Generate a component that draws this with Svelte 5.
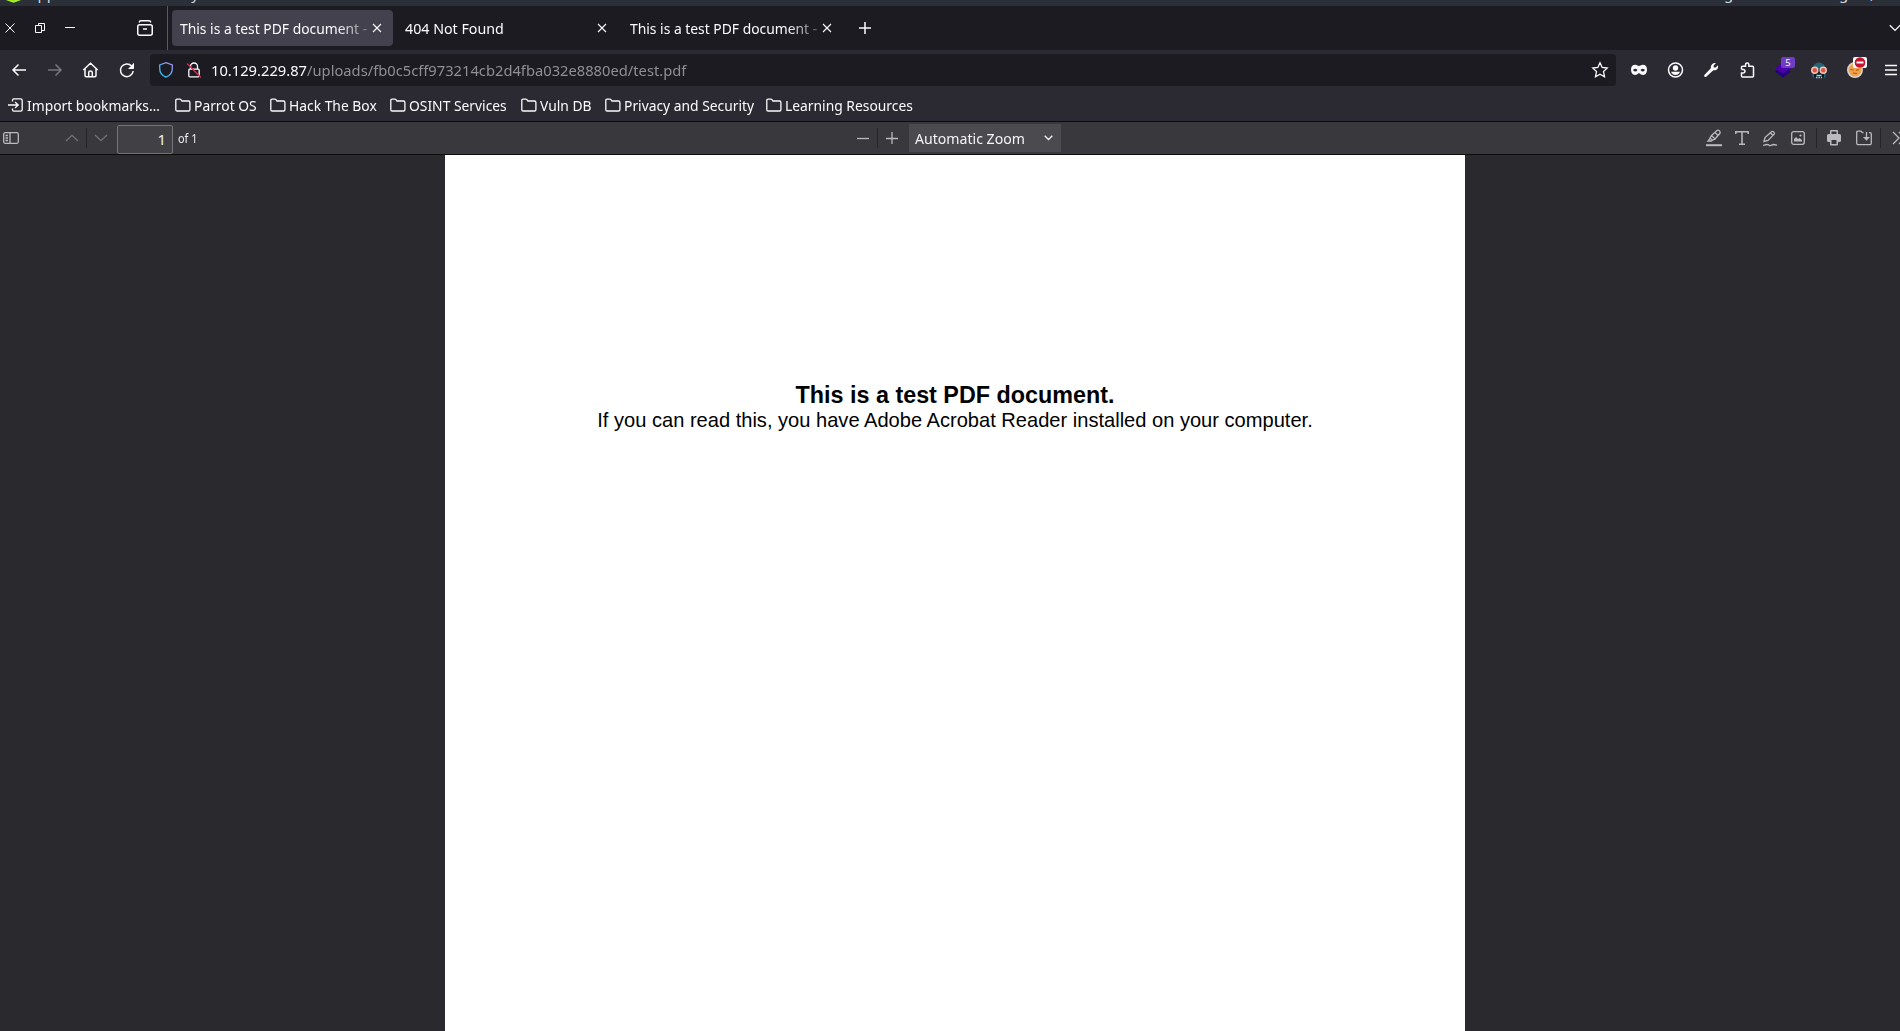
<script>
  const tabs = [
    { title: 'This is a test PDF document -', active: true, fade: true },
    { title: '404 Not Found', active: false, fade: false },
    { title: 'This is a test PDF document -', active: false, fade: true }
  ];
  const bookmarks = [
    { label: 'Parrot OS', width: 95 },
    { label: 'Hack The Box', width: 120 },
    { label: 'OSINT Services', width: 131 },
    { label: 'Vuln DB', width: 84 },
    { label: 'Privacy and Security', width: 161 },
    { label: 'Learning Resources', width: 160 }
  ];
</script>

<div class="screen">
  <div class="panel">
    <svg class="logo" width="16" height="6" viewBox="0 0 16 6"><path d="M0 0h16L8 3.2z" fill="#86d015" /><path d="M0 0l7.5 2.8L15 0" stroke="#a5ee2c" fill="none" stroke-width="2" /></svg>
    <span class="apps">Applications</span><span class="places">Places</span><span class="system">System</span>
    <span class="g1">g</span><span class="g2">g</span><span class="g3">,</span>
  </div>

  <div class="tabbar">
    <div class="win">
      <svg width="20" height="20" viewBox="0 0 20 20"><path d="M5.5 5.5l9 9m0-9l-9 9" /></svg>
      <svg width="20" height="20" viewBox="0 0 20 20"><path d="M5.5 7.5h6v7h-6zM8.500 7.500V5.500h6v7H12" /></svg>
      <svg width="20" height="20" viewBox="0 0 20 20"><path d="M5 9.500h10" /></svg>
    </div>
    <svg class="archive" width="18" height="18" viewBox="0 0 18 18"><rect x="1.750" y="5.750" width="14.500" height="10.500" rx="2" /><path d="M3.200 3.500Q3.500 1.800 5 1.800h8q1.500 0 1.800 1.700M7 10h4" /></svg>
    <div class="tabs">
      {#each tabs as tab}
        <div class="tab" class:active={tab.active}>
          <div class="title" class:fade={tab.fade}><span class="narrow">{tab.title}</span></div>
          <svg width="10" height="10" viewBox="0 0 10 10"><path d="M1 1l8 8m0-8L1 9" /></svg>
        </div>
      {/each}
      <svg class="plus" width="12" height="12" viewBox="0 0 12 12"><path d="M6 0v12M0 6h12" /></svg>
    </div>
    <svg class="alltabs" width="12" height="8" viewBox="0 0 12 8"><path d="M.8 1.200L6 6.400l5.200-5.200" /></svg>
  </div>

  <div class="nav">
    <div class="cell"><svg width="16" height="16" viewBox="0 0 16 16"><path d="M15 8H2M7.500 2.500L2 8l5.500 5.500" /></svg></div>
    <div class="cell dim"><svg width="16" height="16" viewBox="0 0 16 16"><path d="M1 8h13M8.500 2.500L14 8l-5.500 5.500" /></svg></div>
    <div class="cell"><svg width="16" height="16" viewBox="0 0 16 16"><path d="M.3 8L7.500 1.200 14.700 8M2 7v6.500q0 1.200 1.200 1.200h8.600q1.200 0 1.200-1.200V7M5.700 14.500V10.500Q5.700 9 7.500 9t1.800 1.500v4" /></svg></div>
    <div class="cell"><svg width="16" height="16" viewBox="0 0 16 16"><path d="M12.600 4A6.400 6.400 0 1 0 14.200 9" /><path class="solid" d="M15 .8v5.500q0 .7-.7.7H9z" /></svg></div>
    <div class="urlbar">
      <svg class="shield" width="16" height="18" viewBox="0 0 16 18">
        <defs><linearGradient id="sh" x1="0" y1="1" x2="1" y2="0"><stop offset="0" stop-color="#26c5f3" /><stop offset=".5" stop-color="#55a8f0" /><stop offset="1" stop-color="#b18cf0" /></linearGradient></defs>
        <path d="M8 1.700L14.300 4v3.500c0 4.200-2.300 7.200-6.300 8.700-4-1.500-6.300-4.500-6.300-8.700V4z" stroke="url(#sh)" />
      </svg>
      <svg class="lock" width="16" height="18" viewBox="0 0 16 18"><rect x="2.800" y="8.200" width="10.400" height="7.600" rx="1" /><path d="M4.500 8V5.500a3.500 3.500 0 0 1 7 0V8" /><path d="M1 2.500L15 16.500" stroke="#e22850" /></svg>
      <div class="url"><span class="narrow"><b>10.129.229.87</b>/uploads/fb0c5cff973214cb2d4fba032e8880ed/test.pdf</span></div>
      <svg class="star" width="18" height="18" viewBox="0 0 18 18"><path d="M9 1.800l2.200 4.700 5 .6-3.700 3.500 1 5.200L9 13.200l-4.500 2.600 1-5.200L1.800 7.100l5-.6z" /></svg>
    </div>
    <div class="cell"><svg width="16" height="16" viewBox="0 0 16 16"><path class="solid" fill-rule="evenodd" d="M4.200 2.700C6 2.700 7 4 8 4s2-1.300 3.800-1.300C14.500 2.700 16 4.500 16 7.500c0 3.300-1.500 5.500-4 5.500-2 0-2.800-1.800-4-1.800S6 13 4 13c-2.500 0-4-2.200-4-5.500C0 4.500 1.500 2.700 4.200 2.700zM2 8q2.300 3 4.500 0Q4.300 5.500 2 8zm7.500 0q2.200 3 4.500 0-2.300-2.500-4.500 0z" /></svg></div>
    <div class="cell"><svg width="16" height="16" viewBox="0 0 16 16"><circle cx="8.500" cy="8" r="7" /><circle class="solid" cx="8.500" cy="6" r="2.700" /><path class="solid" d="M4 9.800h9Q11.500 13 8.500 13T4 9.800z" /></svg></div>
    <div class="cell"><svg width="16" height="16" viewBox="0 0 16 16"><path class="solid" d="M13 1L10.700 3.500v2h2L15 3.200c.7 3.300-1.700 5.800-4.600 5L3.200 14.700c-1 1-2.800-.4-1.800-1.700L8 6.100C7.200 3.200 9.800.3 13 1z" /></svg></div>
    <div class="cell"><svg width="16" height="16" viewBox="0 0 16 16"><path d="M2.500 7.500V5.200q0-1 1-1h3V2.800a1.700 1.700 0 0 1 3.400 0v1.400h3.600q1 0 1 1V14q0 1-1 1h-10q-1 0-1-1v-3h1.700a1.700 1.700 0 0 0 0-3.500H2.500" /></svg></div>
    <div class="cell ext"><svg width="18" height="18" viewBox="0 0 18 18"><path d="M9 5l8 5.500-8 6-8-6z" fill="#24007a" /><path d="M9 1l8 6.200-8 5.500-8-5.500z" fill="#4a00a8" /></svg><span class="badge">5</span></div>
    <div class="cell ext"><svg width="18" height="18" viewBox="0 0 18 18"><path d="M2.500 16.500V8a6.500 6.500 0 0 1 13 0v8.500z" fill="#246477" /><path d="M4 8h10v8.500H4z" fill="#101820" /><circle cx="4.800" cy="9.300" r="3" fill="#df5145" stroke="#f1c5b5" stroke-width="1.500" /><circle cx="13.200" cy="9.300" r="3" fill="#df5145" stroke="#f1c5b5" stroke-width="1.500" /><path d="M6.500 14.500h5M6 16.500h1.500m1 0h1.500m1 0h1" stroke="#85d5e5" stroke-width="1.300" /></svg></div>
    <div class="cell ext"><svg width="18" height="18" viewBox="0 0 18 18"><circle cx="9" cy="9" r="7.200" fill="#f0a04b" stroke="#d9d4ca" stroke-width="1.600" /><path d="M4.500 8.500l3 .5M7 12l4 .5M10 9.500l3-1" stroke="#a95d19" stroke-width="1.200" /></svg>
      <span class="stop"><svg width="12" height="11" viewBox="0 0 12 11"><circle cx="6" cy="5.500" r="5.300" fill="#c4122f" /><path d="M2.500 5.500h7" stroke="#fff" stroke-width="2" /></svg></span></div>
    <div class="cell"><svg width="16" height="16" viewBox="0 0 16 16"><path d="M2 3.500h12M2 8h12M2 12.500h12" /></svg></div>
  </div>

  <div class="bookmarks">
    <div class="bm import"><svg width="16" height="16" viewBox="0 0 16 16"><path d="M4.500 4.500V3.200q0-1.400 1.400-1.400h6.700q1.600 0 1.600 1.400v9.600q0 1.400-1.600 1.400H5.900q-1.400 0-1.400-1.400v-1.300M0 8h10M7 5l3.200 3L7 11" /></svg><span class="narrow">Import bookmarks…</span></div>
    {#each bookmarks as b}
      <div class="bm" style:width="{b.width}px"><svg width="16" height="16" viewBox="0 0 16 16"><path d="M.8 12.700V3.500q0-1.300 1.300-1.300h2.800q.6 0 1 .5l1 1.300h6.600q1.400 0 1.400 1.400v7.300q0 1.300-1.400 1.300H2.200Q.8 14 .8 12.700z" /></svg><span class="narrow">{b.label}</span></div>
    {/each}
  </div>

  <div class="toolbar">
    <svg class="side" width="16" height="14" viewBox="0 0 16 14"><rect x=".7" y="1.700" width="14.600" height="10.600" rx="1.500" /><path d="M7 2v10M2.500 4.500h2.500M2.500 7H5M2.500 9.500H5" /></svg>
    <svg class="up" width="14" height="8" viewBox="0 0 14 8"><path d="M1 7l6-5.700L13 7" /></svg>
    <i></i>
    <svg class="down" width="14" height="8" viewBox="0 0 14 8"><path d="M1 1l6 5.700L13 1" /></svg>
    <div class="pageno">1</div><div class="of"><span class="narrow">of 1</span></div>
    <svg class="minus" width="12" height="12" viewBox="0 0 12 12"><path d="M0 6.500h12" /></svg>
    <i></i>
    <svg class="zoomin" width="12" height="12" viewBox="0 0 12 12"><path d="M6 0v12M0 6.500h12" /></svg>
    <div class="select"><div class="value"><span class="narrow">Automatic Zoom</span></div><svg width="9" height="6" viewBox="0 0 9 6"><path d="M.7 .8l3.800 3.700L8.300.8" /></svg></div>
    <div class="tools">
      <svg width="16" height="18" viewBox="0 0 16 18"><path d="M0 16.200h16" stroke-width="2" /><path d="M5.500 6.500L11 1.500q1-.8 2.300.3t.7 2.500L9 10zM5.500 6.500L4 9l2.500 2.300L9 10M4 9.500L2 12h3.500l1-1M9 3.500l3 3" /></svg>
      <svg class="t" width="14" height="16" viewBox="0 0 14 16"><path d="M.8 4V1.700h12.400V4M7 1.700v12.600M4 14.300h6" stroke-width="1.500" /></svg>
      <svg class="pen" width="16" height="17" viewBox="0 0 16 17"><path d="M2 11.500l1-4L9.500 1.800q1-.8 2.200.2t.5 2.200L6 10.500zM8.500 3l2.700 2.700M1 15.500q3-1 4.500-1t1.500.8 2 0 2.500-.8 3.500.6" /></svg>
      <svg class="img" width="14" height="14" viewBox="0 0 14 14"><rect x=".7" y=".7" width="12.600" height="12.600" rx="2" /><path class="fill" d="M3 10.500V8l2-2 2 2 1.500-1L11 9v1.500z" /><circle class="fill" cx="9.500" cy="4.500" r="1.100" /></svg>
      <i></i>
      <svg class="print" width="14" height="16" viewBox="0 0 14 16"><path class="fill" d="M3 4V1q0-1 1-1h6q1 0 1 1v3h1.500Q14 4 14 5.500v5q0 1.500-1.500 1.500H11v2.500q0 1-1 1H4q-1 0-1-1V12H1.500Q0 12 0 10.500v-5Q0 4 1.500 4zm1.500 0h5V1.500h-5zm0 6v4h5v-4z" fill-rule="evenodd" /></svg>
      <svg class="save" width="16" height="16" viewBox="0 0 16 16"><path d="M7.500 2.700H6.500L5 1.200H2Q.7 1.200.7 2.500v10.800q0 1.300 1.300 1.300h12q1.300 0 1.300-1.300V4q0-1.300-1.300-1.300h-1M10.500 2v7" /><path class="fill" d="M7 7h7l-3.500 3.700z" /></svg>
      <i></i>
      <svg class="more" width="14" height="14" viewBox="0 0 14 14"><path d="M1 1l6 6-6 6M7 1l6 6-6 6" /></svg>
    </div>
  </div>

  <div class="viewer">
    <div class="page">
      <div class="heading">This is a test PDF document.</div>
      <div class="body">If you can read this, you have Adobe Acrobat Reader installed on your computer.</div>
    </div>
  </div>
</div>

<style>
  :global(body) { overflow: hidden; background: #2a2a2e; }
  .screen { width: 1900px; height: 1031px; overflow: hidden; display: flex; flex-direction: column; font: 15px/20px "Noto Sans", sans-serif; color: #fbfbfe; white-space: nowrap; }
  .screen * { box-sizing: border-box; }
  svg { flex: none; display: block; fill: none; stroke: currentColor; stroke-width: 1.300; overflow: visible; }
  .solid, .fill { fill: currentColor; stroke: none; }
  .narrow { display: inline-block; transform: scaleX(.923); transform-origin: 0 50%; }

  .panel { position: relative; height: 6px; flex: none; background: #2b2f38; overflow: hidden; color: #d3dae3; }
  .panel svg, .panel span { position: absolute; }
  .panel .logo { left: 6px; top: -1px; stroke: none; }
  .panel span { top: -17px; font-size: 15px; }
  .panel .apps { left: 28px; }
  .panel .places { left: 125px; }
  .panel .system { left: 183px; }
  .panel .g1 { left: 1724px; }
  .panel .g2 { left: 1839px; }
  .panel .g3 { left: 1870px; }

  .tabbar { height: 44px; flex: none; display: flex; align-items: center; background: #1c1b22; }
  .win { display: flex; gap: 10px; width: 136px; }
  .win svg { stroke-width: 1; }
  .archive { stroke-width: 1.500; }
  .tabs { display: flex; align-items: center; gap: 4px; height: 44px; margin-left: 13px; padding-left: 4px; border-left: 1px solid #5b5a63; }
  .tab { display: flex; align-items: center; width: 221px; height: 36px; padding: 0 11px 0 8px; border-radius: 4px; }
  .tab.active { background: #42414d; }
  .title { width: 188px; margin-right: 4px; overflow: hidden; line-height: 24px; }
  .title .narrow { transform: scaleX(.95); }
  .fade { mask-image: linear-gradient(to right, #000 157px, transparent 200px); }
  .fade .narrow { transform: scaleX(.924); }
  .tab svg { stroke-width: 1.100; }
  .plus { margin-left: 12px; stroke-width: 1.500; }
  .alltabs { margin-left: auto; margin-right: -1px; }

  .nav { height: 40px; flex: none; display: flex; align-items: center; padding-left: 1px; background: #2b2a33; }
  .cell { width: 36px; height: 36px; flex: none; display: flex; align-items: center; justify-content: center; position: relative; }
  .cell svg { stroke-width: 1.500; }
  .dim { color: #77767e; }
  .urlbar { display: flex; align-items: center; width: 1466px; height: 32px; flex: none; margin: 0 5px; padding: 0 7px 0 8px; border-radius: 4px; background: #1c1b22; }
  .lock { margin: 0 9px 0 12px; }
  .url { flex: 1; color: #8f8f96; line-height: 22px; }
  .url .narrow { transform: scaleX(.981); }
  .url b { font-weight: 400; color: #fbfbfe; }
  .ext svg { stroke: none; }
  .badge { position: absolute; left: 16px; top: 5px; width: 14px; height: 11px; border-radius: 2px; background: #6f3cc4; font-size: 9.500px; line-height: 11px; text-align: center; }
  .stop { position: absolute; left: 16px; top: 5px; width: 14px; height: 11px; background: #fff; border-radius: 2px; display: flex; justify-content: center; }

  .bookmarks { height: 31px; flex: none; display: flex; align-items: center; padding: 0 0 2px 8px; background: #2b2a33; }
  .bm { display: flex; align-items: center; gap: 3px; }
  .import { width: 167px; }

  .toolbar { height: 34px; flex: none; display: flex; align-items: center; border: solid #0c0c0d; border-width: 1px 0; background: #38383d; color: #bbbbbd; }
  .toolbar > * { flex-shrink: 0; }
  .toolbar i { width: 1px; height: 20px; background: #252529; flex: none; }
  .side { margin: 0 46px 0 3px; }
  .up, .down { color: #737377; }
  .up { margin-right: 7px; }
  .down { margin: 0 9px 0 7px; }
  .pageno { width: 56px; height: 29px; margin-top: 3px; padding-right: 6px; border: 1px solid #737378; border-radius: 2px; background: #414145; color: #f0f0f2; text-align: right; line-height: 26px; }
  .of { width: 679px; padding: 1px 0 0 5px; font-size: 12.500px; color: #f0f0f2; }
  .of .narrow { transform: scaleX(.87); }
  .minus { margin-left: 5px; margin-right: 8px; }
  .zoomin { margin: 0 11px 0 8px; }
  .select { width: 152px; height: 28px; display: flex; align-items: center; padding: 0 0 1px 6px; background: #4a4a4f; color: #f5f5f8; }
  .value { width: 129px; }
  .value .narrow { transform: scaleX(.94); }
  .tools { display: flex; align-items: center; margin-left: 645px; }
  .t { margin: 0 13px; }
  .img { margin: 0 11px 0 13px; }
  .print { margin: 0 15px 0 10px; }
  .save { margin-right: 8px; }
  .more { margin-left: 11px; }

  .viewer { flex: 1; display: flex; background: #2a2a2e; padding-left: 445px; }
  .page { width: 1020px; background: #fff; color: #000; font-family: "Liberation Sans", Arial, sans-serif; text-align: center; padding-top: 226px; }
  .heading { font-size: 23.330px; font-weight: 700; line-height: 28px; }
  .body { font-size: 20.080px; line-height: 22px; }
</style>
